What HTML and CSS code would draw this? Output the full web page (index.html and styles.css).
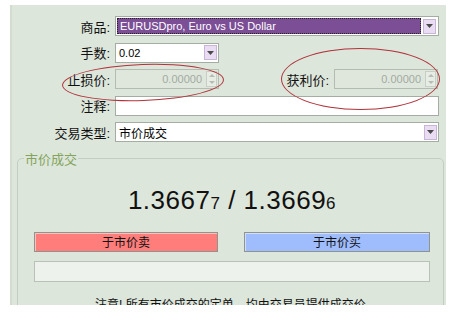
FILE: index.html
```html
<!DOCTYPE html>
<html lang="zh-CN">
<head>
    <meta charset="UTF-8">
    <title>新定单</title>
    <link rel="stylesheet" href="styles.css">
</head>
<body>
    <div class="dialog">
        <div class="row">
            <label class="lbl">商品:</label>
            <div class="combo wide selected">
                <span class="val">EURUSDpro, Euro vs US Dollar</span>
                <span class="arrow"><svg width="7" height="4" viewBox="0 0 7 4"><path d="M0 0h7L3.5 4z" fill="#4a4a4a"/></svg></span>
            </div>
        </div>
        <div class="row">
            <label class="lbl">手数:</label>
            <div class="combo narrow">
                <span class="val">0.02</span>
                <span class="arrow"><svg width="7" height="4" viewBox="0 0 7 4"><path d="M0 0h7L3.5 4z" fill="#4a4a4a"/></svg></span>
            </div>
        </div>
        <div class="row">
            <label class="lbl">止损价:</label>
            <div class="spin narrow">
                <span class="val">0.00000</span>
                <span class="spinner"><i class="up"></i><i class="down"></i></span>
            </div>
            <label class="lbl tp">获利价:</label>
            <div class="spin narrow">
                <span class="val">0.00000</span>
                <span class="spinner"><i class="up"></i><i class="down"></i></span>
            </div>
        </div>
        <div class="row">
            <label class="lbl">注释:</label>
            <div class="field wide"></div>
        </div>
        <div class="row">
            <label class="lbl">交易类型:</label>
            <div class="combo wide">
                <span class="val cjk">市价成交</span>
                <span class="arrow"><svg width="7" height="4" viewBox="0 0 7 4"><path d="M0 0h7L3.5 4z" fill="#4a4a4a"/></svg></span>
            </div>
        </div>

        <fieldset class="group">
            <legend>市价成交</legend>
            <div class="quote">1.3667<small>7</small> / 1.3669<small>6</small></div>
            <div class="buttons">
                <button class="btn sell">于市价卖</button>
                <button class="btn buy">于市价买</button>
            </div>
            <div class="progress"></div>
            <p class="notice">注意! 所有市价成交的定单，均由交易员提供成交价.</p>
        </fieldset>

        <!-- ellipses drawn over the form -->
        <span class="ring ring-sl"></span>
        <span class="ring ring-tp"></span>
    </div>
</body>
</html>
```

FILE: styles.css
```css
body {
    margin: 0;
    background: #fff;
    font-family: "Liberation Sans", "Noto Sans CJK SC", sans-serif;
    font-size: 12px;
}
.dialog {
    position: relative;
    margin: 5px 0 0 10px;
    width: 436px;
    height: 300px;
    padding-top: 11px;
    box-sizing: border-box;
    background: #dde6db;
    border-left: 2px solid #d2dccf;
    overflow: hidden;
}
.row {
    display: flex;
    align-items: center;
    height: 20px;
    margin-bottom: 6.5px;
}
.lbl {
    width: 98px;
    text-align: right;
    padding-right: 5px;
    color: #111;
    font-size: 13px;
    white-space: nowrap;
}
.lbl.tp {
    width: 110px;
}
.combo, .spin, .field {
    display: flex;
    align-items: center;
    height: 20px;
    box-sizing: border-box;
    border: 1px solid #a5aca3;
    background: #fff;
}
.wide {
    width: 324px;
}
.narrow {
    width: 104px;
}
.val {
    flex: 1;
    padding-left: 3px;
    font-size: 11px;
    white-space: nowrap;
}
.val.cjk {
    font-size: 12px;
}
.combo.selected {
    padding: 1px;
}
.combo.selected .val {
    background: #7b4e96;
    color: #fff;
    height: 16px;
    line-height: 16px;
    outline: 1px dotted #222;
    outline-offset: -1px;
}
.arrow {
    width: 13px;
    height: 15px;
    margin: 0 1px 0 2px;
    display: flex;
    align-items: center;
    justify-content: center;
    background: #e9dcf3;
    border: 1px solid #c7b6d6;
    box-sizing: border-box;
}
.spin {
    background: #dfe7dd;
    border-color: #b4bcb2;
}
.spin .val {
    text-align: right;
    color: #a3aaa1;
    padding-right: 4px;
}
.spinner {
    display: flex;
    flex-direction: column;
    width: 11px;
    height: 16px;
    margin-right: 1px;
    border: 1px solid #c7cec5;
    box-sizing: border-box;
    background: #e7ece5;
}
.spinner i {
    flex: 1;
    display: flex;
    align-items: center;
    justify-content: center;
}
.spinner .up::after {
    content: "";
    border: 3px solid transparent;
    border-bottom-color: #b6bcb4;
    border-top: 0;
}
.spinner .down::after {
    content: "";
    border: 3px solid transparent;
    border-top-color: #b6bcb4;
    border-bottom: 0;
}
.group {
    margin: 6px 2px 0 5px;
    padding: 0 13px 0 16px;
    height: 200px;
    border: 1px solid #c4cdc1;
    border-radius: 5px;
}
.group legend {
    margin-left: -10px;
    padding: 0 1px;
    color: #83a45a;
    font-size: 13px;
}
.quote {
    margin-top: 17px;
    text-align: center;
    font-size: 26px;
    color: #111;
    letter-spacing: 0.5px;
}
.quote small {
    font-size: 17px;
}
.buttons {
    display: flex;
    justify-content: space-between;
    margin-top: 16px;
}
.btn {
    height: 20px;
    padding: 0;
    border: 1px solid #8f948d;
    box-shadow: inset 1px 1px 0 rgba(255, 255, 255, 0.5);
    font-family: "Noto Sans CJK SC", sans-serif;
    font-size: 12px;
    color: #111;
}
.sell {
    width: 184px;
    background: #ff7d7b;
}
.buy {
    width: 186px;
    background: #9fbdfd;
}
.progress {
    margin-top: 9px;
    height: 21px;
    border: 1px solid #b9c0b7;
    background: #eef2ec;
    box-sizing: border-box;
}
.notice {
    margin: 13px 0 0;
    text-align: center;
    font-size: 12px;
    color: #111;
}
.ring {
    position: absolute;
    border: 1px solid #b0333c;
    border-radius: 50%;
}
.ring-sl {
    left: 50px;
    top: 59px;
    width: 160px;
    height: 35px;
    transform: rotate(-2deg);
}
.ring-tp {
    left: 269px;
    top: 43px;
    width: 157px;
    height: 60px;
}
```
